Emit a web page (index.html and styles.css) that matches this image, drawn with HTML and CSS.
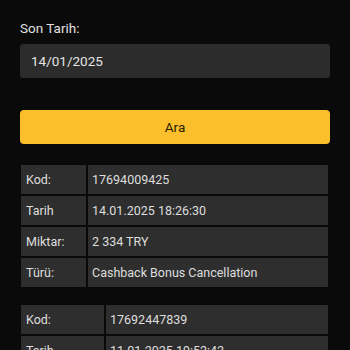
FILE: index.html
```html
<!DOCTYPE html>
<html>
<head>
<meta charset="utf-8">
<link rel="stylesheet" href="styles.css">
</head>
<body>
<div class="page">
  <label class="label">Son Tarih:</label>
  <div class="input">14/01/2025</div>
  <button class="btn">Ara</button>
  <table class="tx tx-a">
    <tr><td class="k">Kod:</td><td>17694009425</td></tr>
    <tr><td class="k">Tarih</td><td>14.01.2025 18:26:30</td></tr>
    <tr><td class="k">Miktar:</td><td>2 334 TRY</td></tr>
    <tr><td class="k">Türü:</td><td>Cashback Bonus Cancellation</td></tr>
  </table>
  <table class="tx tx-b">
    <tr><td class="k">Kod:</td><td>17692447839</td></tr>
    <tr><td class="k">Tarih</td><td>11.01.2025 19:52:42</td></tr>
    <tr><td class="k">Miktar:</td><td>500 TRY</td></tr>
    <tr><td class="k">Türü:</td><td>Bonus</td></tr>
  </table>
</div>
</body>
</html>
```
FILE: styles.css
```css
html, body {
  margin: 0;
  padding: 0;
  background: #0a0a0a;
  height: 100%;
  overflow: hidden;
}
.page {
  padding: 18px 20px 0 20px;
  font-family: Roboto, "Liberation Sans", sans-serif;
  font-size: 13.5px;
  color: #dcdcdc;
  display: flex;
  flex-direction: column;
}
.label {
  display: block;
  line-height: 20px;
  color: #e0e0e0;
}
.input {
  margin-top: 6px;
  height: 34px;
  box-sizing: border-box;
  background: #2c2c2c;
  border-radius: 3px;
  padding: 0 11px;
  line-height: 34px;
  color: #e4e4e4;
}
.btn {
  margin-top: 32px;
  height: 34px;
  border: 0;
  border-radius: 4px;
  background: #fcbf2c;
  color: #2a1e00;
  font-family: Roboto, "Liberation Sans", sans-serif;
  font-size: 13.5px;
  padding: 0;
}
.tx {
  border-collapse: separate;
  border-spacing: 2px;
  width: 311px;
  margin-left: -1px;
  table-layout: fixed;
  font-size: 12.5px;
}
.tx-a { margin-top: 19px; }
.tx-b { margin-top: 14px; }
.tx td {
  background: #2e2e2e;
  height: 29px;
  padding: 0 5px;
  box-sizing: border-box;
  color: #dedede;
  white-space: nowrap;
}
.tx-a td.k { width: 65px; }
.tx-b td.k { width: 83px; }
.tx td + td { padding-left: 4px; }
```
